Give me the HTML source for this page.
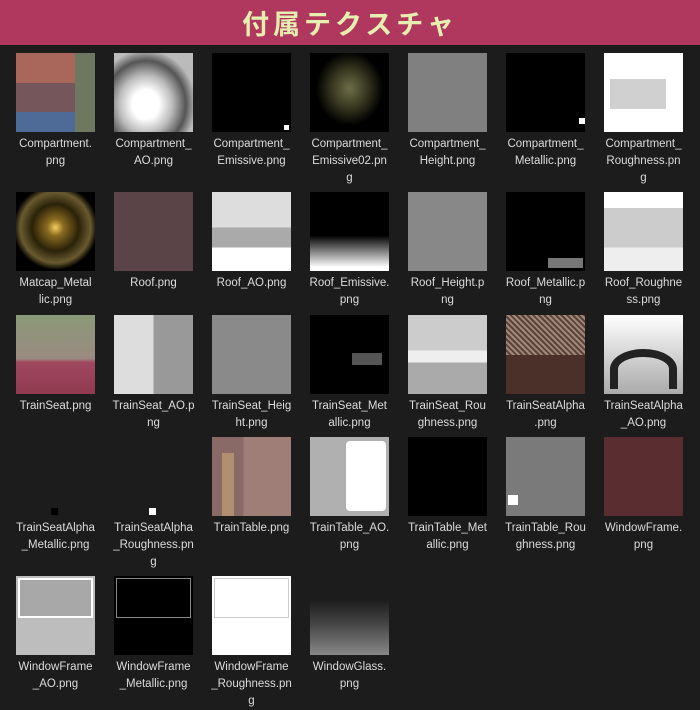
<!DOCTYPE html>
<html><head><meta charset="utf-8"><style>
*{margin:0;padding:0;box-sizing:border-box}
body{width:700px;height:700px;background:#1c1c1c;overflow:hidden;position:relative;font-family:"Liberation Sans","Noto Sans CJK JP",sans-serif}
.hd{position:absolute;left:0;top:0;width:700px;height:45px;background:#b0385e;text-align:center;color:#e6efb0;font-weight:bold;font-size:27px;line-height:45px;letter-spacing:4px;font-family:"Noto Sans CJK JP",sans-serif}
.c{position:absolute;width:98px}
.t{position:absolute;left:16px;top:0;width:79px;height:79px;overflow:hidden}
.l{position:absolute;left:0;top:83px;width:111px;text-align:center;color:#dcdcdc;font-size:11.5px;line-height:17px}
.a{position:absolute}
</style></head><body>
<div class="hd">付属テクスチャ</div>
<div id="g"></div>
<script>
const X=[0,98,196,294,392,490,588],Y=[53,192,315,437,576];
const items=[
["Compartment.<br>png","background:linear-gradient(90deg,transparent 75%,#6e7760 75%),linear-gradient(#a9665a 0,#a9665a 38%,#75565a 38%,#75565a 75%,#4e6a96 75%)"],
["Compartment_<br>AO.png","background:radial-gradient(ellipse at 40% 65%,#fff 20%,#bbb 40%,#555 60%,#bbb 75%)"],
["Compartment_<br>Emissive.png","background:#000",'<div class="a" style="right:2px;bottom:2px;width:5px;height:5px;background:#fff"></div>'],
["Compartment_<br>Emissive02.pn<br>g","background:radial-gradient(ellipse at 50% 45%,#6e6d48 0,#3a3a22 30%,#000 60%)"],
["Compartment_<br>Height.png","background:#808080"],
["Compartment_<br>Metallic.png","background:#000",'<div class="a" style="right:0;bottom:8px;width:6px;height:6px;background:#fff"></div>'],
["Compartment_<br>Roughness.pn<br>g","background:#fff",'<div class="a" style="left:6px;top:26px;width:56px;height:30px;background:#d0d0d0"></div>'],
["Matcap_Metal<br>lic.png","background:radial-gradient(circle at 50% 45%,#f3d060 0,#8a6a20 14%,#2a2208 40%,#6a5a30 60%,#000 72%)"],
["Roof.png","background:#5b4447"],
["Roof_AO.png","background:linear-gradient(#ddd 0,#ddd 45%,#aaa 45%,#aaa 70%,#fff 70%)"],
["Roof_Emissive.<br>png","background:linear-gradient(#000 0,#000 55%,#fff 95%)"],
["Roof_Height.p<br>ng","background:#888"],
["Roof_Metallic.p<br>ng","background:#000",'<div class="a" style="left:42px;top:66px;width:35px;height:10px;background:#777"></div>'],
["Roof_Roughne<br>ss.png","background:linear-gradient(#fff 0,#fff 20%,#ccc 20%,#ccc 70%,#eee 70%)"],
["TrainSeat.png","background:linear-gradient(#8a9a78 0,#9a8a80 55%,#a04860 60%,#903a50 100%)"],
["TrainSeat_AO.p<br>ng","background:linear-gradient(90deg,#ddd 0,#ddd 50%,#999 50%)"],
["TrainSeat_Heig<br>ht.png","background:#8a8a8a"],
["TrainSeat_Met<br>allic.png","background:#000",'<div class="a" style="left:42px;top:38px;width:30px;height:12px;background:#555"></div>'],
["TrainSeat_Rou<br>ghness.png","background:linear-gradient(#ccc 0,#ccc 45%,#eee 45%,#eee 60%,#aaa 60%)"],
["TrainSeatAlpha<br>.png","background:repeating-linear-gradient(45deg,#a0887a 0,#a0887a 2px,#5a4438 2px,#5a4438 4px)",'<div class="a" style="left:0;top:40px;width:79px;height:39px;background:#4a3028"></div>'],
["TrainSeatAlpha<br>_AO.png","background:linear-gradient(#fff,#aaa)",'<div class="a" style="left:6px;top:34px;width:67px;height:40px;border:8px solid #222;border-bottom:none;border-radius:50% 50% 0 0;background:transparent"></div>'],
["TrainSeatAlpha<br>_Metallic.png","background:transparent",'<div class="a" style="left:35px;top:71px;width:7px;height:7px;background:#000"></div>'],
["TrainSeatAlpha<br>_Roughness.pn<br>g","background:transparent",'<div class="a" style="left:35px;top:71px;width:7px;height:7px;background:#fff"></div>'],
["TrainTable.png","background:linear-gradient(90deg,#8a6a66 0,#8a6a66 40%,#a07e78 40%)",'<div class="a" style="left:10px;top:16px;width:12px;height:63px;background:#b09070"></div>'],
["TrainTable_AO.<br>png","background:#b0b0b0",'<div class="a" style="left:36px;top:4px;width:40px;height:70px;background:#fff;border-radius:4px"></div>'],
["TrainTable_Met<br>allic.png","background:#000"],
["TrainTable_Rou<br>ghness.png","background:#7a7a7a",'<div class="a" style="left:2px;top:58px;width:10px;height:10px;background:#fff"></div>'],
["WindowFrame.<br>png","background:#5a2e30"],
["WindowFrame<br>_AO.png","background:#bdbdbd",'<div class="a" style="left:2px;top:2px;width:75px;height:40px;border:2px solid #fff;background:#a8a8a8"></div>'],
["WindowFrame<br>_Metallic.png","background:#000",'<div class="a" style="left:2px;top:2px;width:75px;height:40px;border:1px solid #888"></div>'],
["WindowFrame<br>_Roughness.pn<br>g","background:#fff",'<div class="a" style="left:2px;top:2px;width:75px;height:40px;border:1px solid #ccc"></div>'],
["WindowGlass.<br>png","background:linear-gradient(#1c1c1c 0,#1c1c1c 30%,#444 60%,#888 100%)"]
];
let h='';items.forEach((it,i)=>{const r=Math.floor(i/7),c=i%7;
h+=`<div class="c" style="left:${X[c]}px;top:${Y[r]}px"><div class="t" style="${it[1]}">${it[2]||''}</div><div class="l">${it[0]}</div></div>`});
document.getElementById('g').innerHTML=h;
</script>
</body></html>
